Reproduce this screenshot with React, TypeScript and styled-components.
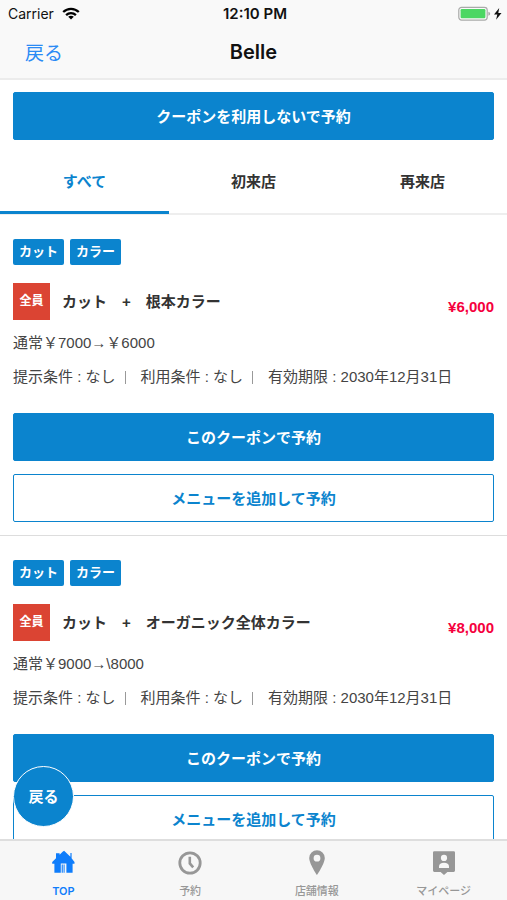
import React, { useState } from "react";
import styled, { createGlobalStyle } from "styled-components";

const BLUE = "#0b84ce";
const IOS_BLUE = "#0f7dfb";
const SANS = '"Liberation Sans", "Noto Sans CJK JP", sans-serif';
const SYSTEM = 'Inter, "Noto Sans CJK JP", sans-serif';

const GlobalStyle = createGlobalStyle`
  * { box-sizing: border-box; }
  body { margin: 0; background: #fff; font-family: ${SANS}; }
  button { font-family: inherit; cursor: pointer; }
`;

const Screen = styled.div`
  position: relative;
  display: flex;
  flex-direction: column;
  height: 100vh;
  overflow: hidden;
`;

const Header = styled.header`
  flex: none;
  background: #f9f9f9;
  border-bottom: 2px solid #ececec;
  font-family: ${SYSTEM};
  color: #111;
`;

const StatusBar = styled.div`
  display: grid;
  grid-template-columns: 1fr auto 1fr;
  align-items: center;
  height: 27px;
  padding: 0 5px 0 8px;
  font-size: 14px;
`;

const Carrier = styled.span`
  display: flex;
  align-items: center;
  gap: 8px;
`;

const Clock = styled.span`
  font-size: 15px;
  font-weight: 600;
`;

const Power = styled.span`
  display: flex;
  justify-content: flex-end;
`;

const NavBar = styled.div`
  display: grid;
  grid-template-columns: 1fr auto 1fr;
  align-items: center;
  height: 51px;
  padding: 0 25px 2px;
`;

const BackLink = styled.button`
  justify-self: start;
  padding: 0;
  border: 0;
  background: none;
  color: #2b8bf5;
  font-size: 19px;
`;

const Title = styled.h1`
  margin: 0;
  font-size: 20px;
  font-weight: 600;
`;

const Content = styled.main`
  flex: 1;
  min-height: 0;
  overflow: hidden;
`;

const TopAction = styled.div`
  padding: 12px 13px;
`;

const ActionButton = styled.button<{ $outline?: boolean }>`
  display: block;
  width: 100%;
  height: 48px;
  padding: 0 0 2px;
  border: 1px solid ${BLUE};
  border-radius: 2px;
  background: ${(p) => (p.$outline ? "#fff" : BLUE)};
  color: ${(p) => (p.$outline ? BLUE : "#fff")};
  font-size: 15px;
  font-weight: 700;
`;

const Tabs = styled.div`
  display: grid;
  grid-template-columns: repeat(3, 1fr);
  border-bottom: 2px solid #eee;
`;

const Tab = styled.button<{ $active: boolean }>`
  height: 62px;
  margin-bottom: -1px;
  padding: 0 0 2px;
  border: 0;
  border-bottom: 3px solid ${(p) => (p.$active ? BLUE : "transparent")};
  background: none;
  color: ${(p) => (p.$active ? BLUE : "#333")};
  font-size: 15px;
  font-weight: 700;
`;

const Coupon = styled.article`
  padding: 24px 13px 13px;
  border-bottom: 1px solid #ddd;
  color: #333;
`;

const Tags = styled.div`
  display: flex;
  gap: 6px;
`;

const Tag = styled.span`
  padding: 0 6px;
  border-radius: 2px;
  background: ${BLUE};
  color: #fff;
  font-size: 13px;
  line-height: 26px;
  font-weight: 700;
`;

const Summary = styled.div`
  display: flex;
  align-items: center;
  margin-top: 18px;
  height: 37px;
`;

const Audience = styled.span`
  width: 37px;
  margin-right: 12px;
  background: #db4433;
  color: #fff;
  font-size: 12px;
  line-height: 37px;
  font-weight: 700;
  text-align: center;
`;

const CouponName = styled.h2`
  flex: 1;
  margin: 0;
  font-size: 15px;
  line-height: 36px;
  font-weight: 700;
`;

const Price = styled.strong`
  align-self: flex-end;
  color: #f5003d;
  font-size: 15px;
  line-height: 26px;
`;

const Description = styled.p`
  margin: 12px 0 0;
  color: #444;
  font-size: 15px;
  line-height: 22px;
`;

const Terms = styled.ul`
  display: flex;
  margin: 12px 0 0;
  padding: 0;
  list-style: none;
  color: #444;
  font-size: 15px;
  line-height: 22px;
  white-space: nowrap;
`;

const Term = styled.li`
  display: flex;
  align-items: center;

  & + &::before {
    content: "";
    width: 1px;
    height: 13px;
    margin: 0 15px 0 9px;
    background: #999;
  }
`;

const Actions = styled.div`
  display: grid;
  gap: 13px;
  margin-top: 25px;
`;

const TabBar = styled.nav`
  flex: none;
  display: grid;
  grid-template-columns: repeat(4, 1fr);
  height: 61px;
  border-top: 2px solid #dedede;
  background: #f7f7f7;
`;

const TabBarLink = styled.a<{ $active?: boolean }>`
  display: flex;
  flex-direction: column;
  align-items: center;
  gap: 8px;
  padding-top: 8px;
  color: ${(p) => (p.$active ? IOS_BLUE : "#979797")};
  font-family: ${SYSTEM};
  font-size: 11px;
  line-height: 16px;
  font-weight: ${(p) => (p.$active ? 600 : 500)};
  text-decoration: none;
`;

const FloatingBack = styled.button`
  position: absolute;
  left: 13px;
  bottom: 73px;
  width: 61px;
  height: 61px;
  padding: 0 0 2px;
  border: 1px solid #fff;
  border-radius: 50%;
  background: ${BLUE};
  color: #fff;
  font-size: 15px;
  font-weight: 700;
`;

const WifiIcon = () => (
  <svg width="18" height="13" viewBox="0 0 18 13" aria-hidden="true">
    <g fill="none" stroke="#000" strokeWidth="2.3">
      <path d="M1.2 5C5.6.7 12.4.7 16.8 5" />
      <path d="M4.1 8.1c2.8-2.7 7-2.7 9.8 0" />
    </g>
    <path d="M6.2 9.8c1.6-1.5 4-1.5 5.6 0L9 12.6z" />
  </svg>
);

const BatteryIcon = () => (
  <svg width="44" height="16" viewBox="0 0 44 16" aria-hidden="true">
    <rect x="0.8" y="1.3" width="28.4" height="12.8" rx="2.8" fill="#fafafa" stroke="#a9aaa9" strokeWidth="1.2" />
    <rect x="2.6" y="3.1" width="24.8" height="9.2" rx="1.2" fill="#4bd763" />
    <path d="M30.4 5.7q1.8.6 1.8 2t-1.8 2z" fill="#a9aaa9" />
    <path d="M41.2 2 36 8.4h3.3l-1.2 5.4L43.5 7h-3.2z" fill="#111" />
  </svg>
);

const HomeIcon = () => (
  <svg width="24" height="26" viewBox="0 0 24 26" fill="currentColor" aria-hidden="true">
    <path d="M1.2 13 5 9.2V4.3h3.6v1.5l3-3 1.5-1 6.3 6V4h1.2v5.2l2.9 3.8v1.8h-1.9v8.9h-6.2v-9.2H9.8v9.2H3.4v-8.9H1.2z" />
    <path d="M10.7 15.4h1.1v8.3h-1.1zm1.9 0h1v8.3h-1z" />
  </svg>
);

const ClockIcon = () => (
  <svg width="24" height="26" viewBox="0 0 24 26" fill="none" stroke="currentColor" aria-hidden="true">
    <circle cx="12" cy="14" r="10.2" strokeWidth="2.8" />
    <path d="M11.8 7.7v6.7l3.4 4" strokeWidth="2.6" />
  </svg>
);

const PinIcon = () => (
  <svg width="24" height="26" viewBox="0 0 24 26" fill="currentColor" aria-hidden="true">
    <path fillRule="evenodd" d="M12 1.2a7.8 7.8 0 0 0-7.8 7.7C4.2 14.4 12 26 12 26s7.8-11.6 7.8-17.1A7.8 7.8 0 0 0 12 1.2zm0 4.6a3.4 3.4 0 1 1 0 6.8 3.4 3.4 0 0 1 0-6.8z" />
  </svg>
);

const ProfileIcon = () => (
  <svg width="24" height="26" viewBox="0 0 24 26" aria-hidden="true">
    <path fill="currentColor" d="M2.3 2.3h19.4q1.3 0 1.3 1.3v18q0 1.3-1.3 1.3h-6.3L12 26l-3.4-3.1H2.3Q1 22.9 1 21.6v-18q0-1.3 1.3-1.3z" />
    <circle cx="12" cy="8.9" r="3.1" fill="#f7f7f7" />
    <path fill="#f7f7f7" d="M7 18.9v-1.6c0-2.2 2-3.6 5-3.6s5 1.4 5 3.6v1.6z" />
  </svg>
);

const tabs = ["すべて", "初来店", "再来店"];

const coupons = [
  { name: "カット　+　根本カラー", price: "¥6,000", description: "通常￥7000→￥6000" },
  { name: "カット　+　オーガニック全体カラー", price: "¥8,000", description: "通常￥9000→\\8000" },
];

const terms = ["提示条件 : なし", "利用条件 : なし", "有効期限 : 2030年12月31日"];

const navigation = [
  { label: "TOP", Icon: HomeIcon },
  { label: "予約", Icon: ClockIcon },
  { label: "店舗情報", Icon: PinIcon },
  { label: "マイページ", Icon: ProfileIcon },
];

export default function App() {
  const [activeTab, setActiveTab] = useState(0);

  return (
    <Screen>
      <GlobalStyle />
      <Header>
        <StatusBar>
          <Carrier>Carrier <WifiIcon /></Carrier>
          <Clock>12:10 PM</Clock>
          <Power><BatteryIcon /></Power>
        </StatusBar>
        <NavBar>
          <BackLink type="button">戻る</BackLink>
          <Title>Belle</Title>
        </NavBar>
      </Header>
      <Content>
        <TopAction>
          <ActionButton type="button">クーポンを利用しないで予約</ActionButton>
        </TopAction>
        <Tabs role="tablist">
          {tabs.map((label, i) => (
            <Tab
              key={label}
              type="button"
              role="tab"
              aria-selected={i === activeTab}
              $active={i === activeTab}
              onClick={() => setActiveTab(i)}
            >
              {label}
            </Tab>
          ))}
        </Tabs>
        {coupons.map((coupon) => (
          <Coupon key={coupon.name}>
            <Tags>
              <Tag>カット</Tag>
              <Tag>カラー</Tag>
            </Tags>
            <Summary>
              <Audience>全員</Audience>
              <CouponName>{coupon.name}</CouponName>
              <Price>{coupon.price}</Price>
            </Summary>
            <Description>{coupon.description}</Description>
            <Terms>
              {terms.map((term) => (
                <Term key={term}>{term}</Term>
              ))}
            </Terms>
            <Actions>
              <ActionButton type="button">このクーポンで予約</ActionButton>
              <ActionButton type="button" $outline>メニューを追加して予約</ActionButton>
            </Actions>
          </Coupon>
        ))}
      </Content>
      <FloatingBack type="button">戻る</FloatingBack>
      <TabBar>
        {navigation.map(({ label, Icon }, i) => (
          <TabBarLink key={label} href="#" $active={i === 0}>
            <Icon />
            {label}
          </TabBarLink>
        ))}
      </TabBar>
    </Screen>
  );
}
